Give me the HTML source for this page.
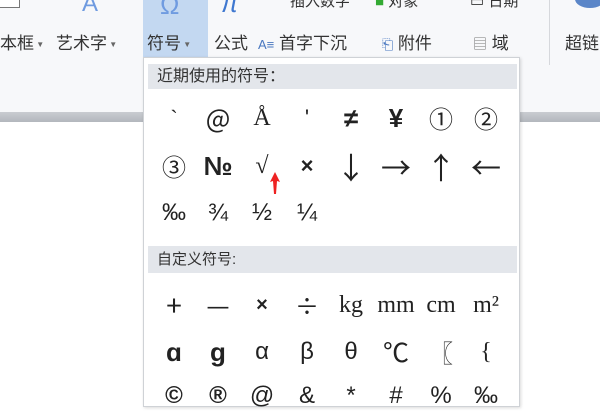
<!DOCTYPE html>
<html><head><meta charset="utf-8"><style>
*{margin:0;padding:0;box-sizing:border-box}
body{width:600px;height:400px;overflow:hidden;background:#fff;position:relative;font-family:"Liberation Sans","Noto Sans CJK SC",sans-serif;color:#333}
.tb{position:absolute;left:0;top:0;width:600px;height:113px;background:#f7f8fa}
.band{position:absolute;left:0;top:112px;width:600px;height:10px;background:linear-gradient(#c9ccd1,#b3b7bd)}
.hl{position:absolute;left:143px;top:0;width:65px;height:57px;background:#c3d8f1}
.t{position:absolute;font-size:17px;color:#333;white-space:nowrap}
.dd{font-size:8px;color:#666;vertical-align:middle}
.panel{position:absolute;left:143px;top:57px;width:377px;height:350px;background:#fff;border:1px solid #cfd2d6;box-shadow:1px 1px 3px rgba(0,0,0,.15)}
.hd{position:absolute;left:4px;width:369px;height:25px;background:#e3e6eb;font-size:15px;line-height:25px;padding-left:9px;color:#333}
.s{position:absolute;width:44px;text-align:center;font-size:22px;color:#222;line-height:30px}
.serif{font-family:"Liberation Serif","Noto Serif CJK SC",serif}
.cjk{font-family:"Noto Sans CJK SC",sans-serif}
.sep{position:absolute;left:549px;top:0;width:1px;height:65px;background:#d6d8dc}
</style></head><body>
<div class="tb"></div>
<div class="hl"></div>
<div class="sep"></div>
<div class="band"></div>
<div class="t" style="left:-2px;top:-6px;width:22px;height:14px;border:1px solid #777;background:#fff"></div>
<div class="t" style="left:82px;top:-10px;font-size:24px;color:#6f9be0">A</div>
<div class="t" style="left:160px;top:-10px;font-size:26px;color:#6f9be0">Ω</div>
<div class="t" style="left:221px;top:-12px;font-size:26px;color:#3f78d0;font-style:italic">π</div>
<div class="t" style="left:290px;top:-10px;font-size:15px">插入数字</div>
<div class="t" style="left:375px;top:-10px;font-size:15px"><span style="color:#3a3">■</span> 对象</div>
<div class="t" style="left:470px;top:-10px;font-size:15px">▭ 日期</div>
<div class="t" style="left:575px;top:-10px;width:30px;height:18px;border-radius:50%;background:#5b86c8"></div>
<div class="t" style="left:0;top:29px">本框<span class="dd"> ▼</span></div>
<div class="t" style="left:56px;top:29px">艺术字<span class="dd"> ▼</span></div>
<div class="t" style="left:147px;top:29px">符号<span class="dd"> ▼</span></div>
<div class="t" style="left:214px;top:29px">公式</div>
<div class="t" style="left:258px;top:29px"><span style="font-size:13px;color:#4a78c0">A≡</span> 首字下沉</div>
<div class="t" style="left:382px;top:29px"><span style="font-size:14px;color:#4a78c0">⎗</span> 附件</div>
<div class="t" style="left:473px;top:29px"><span style="font-size:14px;color:#777">▤</span> 域</div>
<div class="t" style="left:565px;top:29px">超链</div>

<div class="panel">
<div class="hd" style="top:6px;font-size:16px">近期使用的符号：</div>
<div class="hd" style="top:188px;height:27px;line-height:27px">自定义符号:</div>
</div>
<div id="g"></div>
<script>
// style codes: 0 sans, 1 serif, 2 cjk, 3 bold sans
var xs=[152,196,240,285,329,374,419,464];
var rows=[
[103,["`","@","Å","'","≠","¥","①","②"],[1,2,1,0,3,3,2,2],[22,26,24,22,26,26,24,24]],
[151,["③","№","√","×","↓","→","↑","←"],[2,3,1,3,2,2,2,2],[24,26,24,22,30,30,30,30]],
[198,["‰","¾","½","¼"],[0,0,0,0],[24,24,24,24]],
[290,["+","—","×","÷","kg","mm","cm","m²"],[2,2,3,2,1,1,1,1],[28,26,20,24,24,24,24,24]],
[337,["ɑ","g","α","β","θ","℃","〖","{"],[3,3,0,0,0,2,2,1],[26,26,24,24,24,26,24,24]],
[381,["©","®","@","&","*","#","%","‰"],[3,3,0,0,0,0,0,0],[24,24,24,24,24,24,24,24]]];
var cls=["s","s serif","s cjk","s"];
var h="";
rows.forEach(function(r){r[1].forEach(function(c,i){var st=r[2][i];h+='<div class="'+cls[st]+'" style="left:'+xs[i]+'px;top:'+r[0]+'px;font-size:'+r[3][i]+'px;'+(st==3?'font-weight:bold;':'')+'">'+c+'</div>';});});
document.getElementById("g").innerHTML=h;
</script>
<svg style="position:absolute;left:268px;top:170px" width="14" height="28"><path d="M7 2 L12 12 L9 11 L8 24 L6 24 L5 11 L2 12 Z" fill="#e22"/></svg>
</body></html>
